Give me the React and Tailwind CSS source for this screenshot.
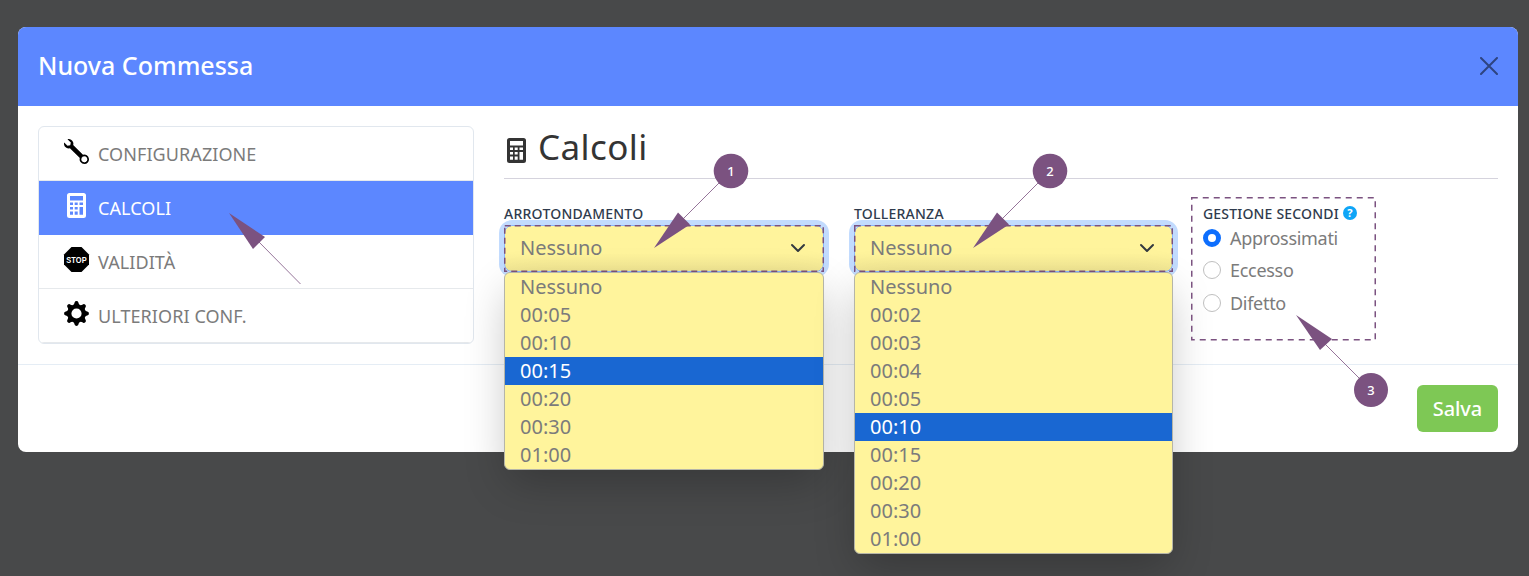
import React, { useState } from 'react';
import { BsWrench } from 'react-icons/bs';

const ROUNDING_OPTIONS = ['Nessuno', '00:05', '00:10', '00:15', '00:20', '00:30', '01:00'];
const TOLERANCE_OPTIONS = ['Nessuno', '00:02', '00:03', '00:04', '00:05', '00:10', '00:15', '00:20', '00:30', '01:00'];

function CalculatorIcon({ className }) {
  return (
    <svg viewBox="0 0 19 25" className={className} fill="currentColor">
      <path
        fillRule="evenodd"
        d="M2.500 0h14a2.500 2.500 0 0 1 2.500 2.500v20a2.500 2.500 0 0 1-2.500 2.500h-14a2.500 2.500 0 0 1-2.500-2.500v-20a2.500 2.500 0 0 1 2.500-2.500Z
          M3 3v4.500h13V3Z
          M3 9.500v2.500h3V9.500Z M7.700 9.500v2.500h3V9.500Z M12.500 9.500v2.500h3.500V9.500Z
          M3 14v2.500h3V14Z M7.700 14v2.500h3V14Z M12.500 14v7.700h3.500V14Z
          M3 18.500v3.200h3v-3.200Z M7.700 18.500v3.200h3v-3.200Z"
      />
    </svg>
  );
}

function StopIcon({ className }) {
  return (
    <svg viewBox="0 0 25 25" className={className}>
      <path d="M7.500 0h10L25 7.500v10L17.500 25h-10L0 17.500v-10Z" fill="currentColor" />
      <text x="2.300" y="15.700" fontFamily="Liberation Sans" fontSize="8.800" fontWeight="700" textLength="20.400" lengthAdjust="spacingAndGlyphs" fill="white">
        STOP
      </text>
    </svg>
  );
}

function GearIcon({ className }) {
  return (
    <svg viewBox="-12.5 -12.5 25 25" className={className} fill="currentColor">
      <circle r="7.200" fill="none" stroke="currentColor" strokeWidth="4.200" />
      {[0, 45, 90, 135, 180, 225, 270, 315].map((angle) => (
        <path key={angle} transform={`rotate(${angle})`} d="M-3.600-8.300Q-2.300-9-1.800-11.300Q-1.500-12.400 0-12.400Q1.500-12.400 1.800-11.300Q2.300-9 3.600-8.300Z" />
      ))}
    </svg>
  );
}

const menuItems = [
  { key: 'config', label: 'CONFIGURAZIONE', icon: <BsWrench className="h-[25px] w-[25px]" /> },
  { key: 'calc', label: 'CALCOLI', icon: <CalculatorIcon className="h-[25px] w-[19px]" /> },
  { key: 'validity', label: 'VALIDITÀ', icon: <StopIcon className="h-[25px] w-[25px] overflow-visible" /> },
  { key: 'other', label: 'ULTERIORI CONF.', icon: <GearIcon className="h-[25px] w-[25px]" /> },
];

function SideMenu({ active, onSelect }) {
  return (
    <nav className="h-[218px] w-[436px] shrink-0 overflow-hidden rounded-md border border-[#e1e7ee]">
      {menuItems.map((item) => (
        <button
          key={item.key}
          onClick={() => onSelect(item.key)}
          className={`flex h-[54px] w-full border-b pl-6 text-left text-[18px] tracking-[0.08px] ${
            item.key === active
              ? 'border-[#5c87ff] bg-[#5c87ff] text-white'
              : 'border-[#e6e9ec] text-[#7b7b7b]'
          }`}
        >
          <span className={`mt-3 flex w-[27px] justify-center ${item.key === active ? 'text-white' : 'text-black'}`}>
            {item.icon}
          </span>
          <span className="mt-[14px] ml-2 leading-[27px]">{item.label}</span>
        </button>
      ))}
    </nav>
  );
}

function OpenSelect({ label, options, highlighted, className }) {
  return (
    <div className={className}>
      <label className="-mt-px block h-5 text-[14px] leading-[18px] font-medium tracking-[0.24px] text-[#2f3b4d]">{label}</label>
      <div className="relative">
        <div className="flex h-[47px] items-center justify-between rounded-lg border border-[#86b7fe] bg-gradient-to-b from-[#fff49c] from-60% to-[#f2e793] px-[15px] pb-[2px] text-[20px] text-[#7b7b7b] ring-[5px] ring-[#c2dbfe]">
          <span>Nessuno</span>
          <svg viewBox="0 0 16 16" className="mr-[2px] h-4 w-4" fill="none" stroke="#343a40" strokeWidth="2" strokeLinecap="round" strokeLinejoin="round">
            <path d="m2 5 6 6 6-6" />
          </svg>
        </div>
        <svg className="pointer-events-none absolute inset-0 h-full w-full" fill="none">
          <rect x="0.75" y="0.75" className="h-[calc(100%-1.5px)] w-[calc(100%-1.5px)]" stroke="#7b5280" strokeWidth="1.5" strokeDasharray="6 4" />
        </svg>
        <ul className="absolute top-[47px] left-0 w-full overflow-hidden rounded-md border border-[#b5b5a8] bg-[#fff49c] shadow-[0_16px_44px_-4px_rgba(0,0,0,0.24)]">
          {options.map((opt) => (
            <li
              key={opt}
              className={`h-7 pl-[15px] text-[20px] leading-[27px] ${
                opt === highlighted ? 'bg-[#1967d2] text-white' : 'text-[#7b7b7b]'
              }`}
            >
              {opt}
            </li>
          ))}
        </ul>
      </div>
    </div>
  );
}

function SecondsOptions() {
  const [mode, setMode] = useState('Approssimati');

  return (
    <div className="relative h-[144px] w-[185px] pt-[7px] pl-3">
      <svg className="pointer-events-none absolute inset-0 h-full w-full" fill="none">
        <rect x="0.75" y="0.75" width="183.5" height="142" stroke="#7b5280" strokeWidth="1.5" strokeDasharray="6 5" />
      </svg>
      <div className="flex h-[18px] items-center gap-1 text-[14px] font-medium tracking-[0.18px] whitespace-nowrap text-[#2f3b4d]">
        GESTIONE SECONDI
        <span className="-mt-px flex h-[14px] w-[14px] items-center justify-center rounded-full bg-[#0ea5f7] text-[11px] leading-none font-bold tracking-normal text-white">?</span>
      </div>
      {['Approssimati', 'Eccesso', 'Difetto'].map((opt) => (
        <label key={opt} className="flex h-[32.4px] items-start text-[18px] leading-[32px] tracking-[-0.3px] text-[#7b7b7b]">
          <input type="radio" name="seconds" className="sr-only" checked={mode === opt} onChange={() => setMode(opt)} />
          <span
            className={`mt-[7px] mr-[9px] h-[18px] w-[18px] shrink-0 rounded-full bg-white ${
              mode === opt ? 'border-[5px] border-[#0d6efd]' : 'border border-[#bfbfbf]'
            }`}
          />
          {opt}
        </label>
      ))}
    </div>
  );
}

// Callout arrows and numbered markers drawn over the dialog
function Annotations() {
  return (
    <svg
      className="pointer-events-none absolute inset-0 font-['Noto_Sans'] text-[13px] font-medium"
      width="1529"
      height="576"
      viewBox="0 0 1529 576"
    >
      <g stroke="#7b5280" strokeWidth="0.8">
        <path d="M258 241 300.500 284" />
        <path d="M683 219 731 171" />
        <path d="M1002 219 1050 171" />
        <path d="M1325 344 1371 390" />
      </g>
      <g fill="#7b5280">
        <path d="M229 213 265 237 253 249Z" />
        <path d="M654 248 678 212.500 690 224.500Z" />
        <path d="M973 248 997 212.500 1009 224.500Z" />
        <path d="M1296 315 1332 339 1320 350Z" />
        <circle cx="731" cy="171" r="17.300" />
        <circle cx="1050" cy="171" r="17.300" />
        <circle cx="1371" cy="390" r="17" />
      </g>
      <g fill="white" textAnchor="middle">
        <text x="731" y="175.500">1</text>
        <text x="1050" y="175.500">2</text>
        <text x="1371" y="394.500">3</text>
      </g>
    </svg>
  );
}

export default function App() {
  const [section, setSection] = useState('calc');

  return (
    <div className="relative h-[576px] w-[1529px] overflow-hidden bg-[#48494a] px-[18px] pt-[27px] font-['Noto_Sans',sans-serif]">
      <div className="h-[425px] w-[1500px] rounded-lg bg-white">
        <header className="flex h-[79px] items-center justify-between rounded-t-lg bg-[#5c87ff] px-5 pb-[2px]">
          <h5 className="text-[25px] font-medium text-white">Nuova Commessa</h5>
          <button aria-label="Close">
            <svg viewBox="0 0 18 18" className="h-[18px] w-[18px]" stroke="#2e4480" strokeWidth="2" strokeLinecap="round">
              <path d="M1 1 17 17M17 1 1 17" />
            </svg>
          </button>
        </header>

        <div className="flex h-[258px] gap-[30px] px-5 pt-5">
          <SideMenu active={section} onSelect={setSection} />
          <main className="grow">
            <h2 className="flex h-[53px] border-b border-[#d5d3dd] text-[35px] leading-[42px] tracking-[0.4px] text-[#343434]">
              <CalculatorIcon className="mt-3 mr-[12px] ml-[3px] h-[25px] w-[19px]" />
              Calcoli
            </h2>
            <div className="flex gap-[30px] pt-[27px]">
              <OpenSelect label="ARROTONDAMENTO" options={ROUNDING_OPTIONS} highlighted="00:15" className="w-[320px]" />
              <OpenSelect label="TOLLERANZA" options={TOLERANCE_OPTIONS} highlighted="00:10" className="w-[319px]" />
              <div className="-mt-[9px] -ml-3">
                <SecondsOptions />
              </div>
            </div>
          </main>
        </div>

        <footer className="flex h-[88px] justify-end border-t border-[#e5edf5] px-5 pt-5">
          <button className="h-[47px] w-[81px] rounded-md bg-[#7ec855] text-[20px] font-medium tracking-[-0.1px] text-white">Salva</button>
        </footer>
      </div>

      <Annotations />
    </div>
  );
}
